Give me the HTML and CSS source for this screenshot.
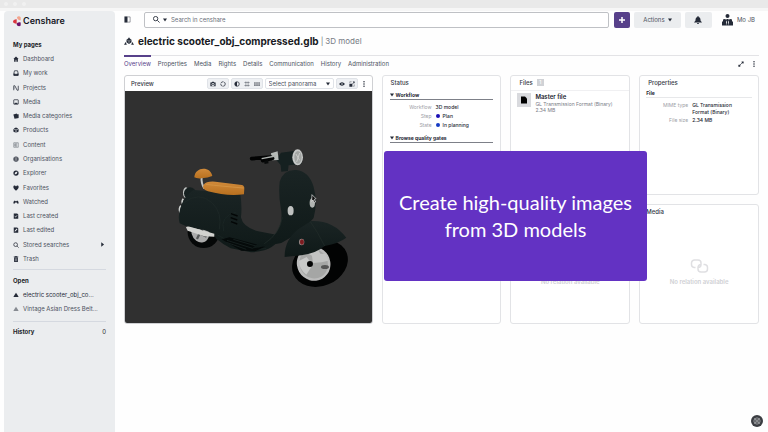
FILE: index.html
```html
<!DOCTYPE html>
<html lang="en">
<head>
<meta charset="utf-8">
<title>electric scooter_obj_compressed.glb – Censhare</title>
<link rel="stylesheet" href="styles.css">
</head>
<body>
<div class="window-bar"><i></i><i></i><i></i></div>
<div class="app">
  <aside class="sidebar">
    <a class="brand" href="#">
      <svg viewBox="0 0 24 32" aria-hidden="true"><path d="M12 3a7 7 0 0 1 11 0v9a9 9 0 0 1-11-9z" fill="#f3a48c"/><path d="M11 9v14C4 22 0 20 0 16s4-6 11-7z" fill="#d9363e"/><path d="M23 19v9a7 7 0 0 1-12-4c1-5 6-7 12-5z" fill="#6b1168"/></svg>
      <span>Censhare</span>
    </a>
    <h2>My pages</h2>
    <ul class="nav">
      <li><a href="#"><svg viewBox="0 0 16 16"><path d="M8 1 1 8h2v7h4v-5h2v5h4V8h2z"/></svg>Dashboard</a></li>
      <li><a href="#"><svg viewBox="0 0 16 16"><path class="line" d="M4 2h8l2 8v4H2v-4z"/><path d="M2 9h4l1 2h2l1-2h4v6H2z"/></svg>My work</a></li>
      <li><a href="#"><svg viewBox="0 0 16 16"><path class="line" d="M2 14V2h3l6 12h3V2M2 8h2"/></svg>Projects</a></li>
      <li><a href="#"><svg viewBox="0 0 16 16"><rect class="line" x="2" y="2" width="12" height="12" rx="1"/><path d="m3 13 3-4 2 2 2-2 3 4z"/></svg>Media</a></li>
      <li><a href="#"><svg viewBox="0 0 16 16"><path d="m1 4 9-3 1 2h4v10l-3 1-8 1z"/></svg>Media categories</a></li>
      <li><a href="#"><svg viewBox="0 0 16 16"><path d="m8 1 6 3-6 3-6-3zM1 5l6 3v7l-6-3zm14 0v7l-6 3V8z"/></svg>Products</a></li>
      <li><a href="#"><svg viewBox="0 0 16 16"><path class="thin" d="M2 2h12v12H2zM5 5h6M5 8h6M5 11h6M5 5v6"/></svg>Content</a></li>
      <li><a href="#"><svg viewBox="0 0 16 16"><circle cx="8" cy="8" r="7"/><path class="pale" d="M1 8h14M8 1v14M3 4q5 3 10 0M3 12q5-3 10 0"/></svg>Organisations</a></li>
      <li><a href="#"><svg viewBox="0 0 16 16"><path fill-rule="evenodd" d="M8 1a7 7 0 1 1 0 14A7 7 0 0 1 8 1zm4 3L6 6l-2 6 6-2z"/></svg>Explorer</a></li>
      <li><a href="#"><svg viewBox="0 0 16 16"><path d="M8 15C2 10 1 8 1 5c0-4 5-5 7-1 2-4 7-3 7 1 0 3-1 5-7 10z"/></svg>Favorites</a></li>
      <li><a href="#"><svg viewBox="0 0 16 16"><path d="M1 12c0-4 1-7 4-8l2 2h2l2-2c3 1 4 4 4 8h-4l-1-3H6l-1 3z"/></svg>Watched</a></li>
      <li><a href="#"><svg viewBox="0 0 16 16"><path fill-rule="evenodd" d="M2 1h9l3 3v11H2zm2 7 3 4 5-6-1-1-4 5-2-3z"/></svg>Last created</a></li>
      <li><a href="#"><svg viewBox="0 0 16 16"><path fill-rule="evenodd" d="M2 1h9l3 3v11H2zm2 11 3-1 5-5-2-2-5 5z"/></svg>Last edited</a></li>
      <li><a href="#"><svg viewBox="0 0 16 16"><circle class="line" cx="7" cy="7" r="5"/><path class="line" d="m11 11 4 4"/></svg>Stored searches<svg class="more" viewBox="0 0 16 16"><path d="m4 1 9 7-9 7z"/></svg></a></li>
      <li><a href="#"><svg viewBox="0 0 16 16"><path fill-rule="evenodd" d="M6 0h4v1h4v2H2V1h4zM3 4h10v12H3zm3 2v8h1V6zm3 0v8h1V6z"/></svg>Trash</a></li>
    </ul>
    <section class="open">
      <h2>Open</h2>
      <ul>
        <li><a class="current" href="#"><svg viewBox="0 0 16 16"><path d="m8 2 4 6 3 5H1l3-5z"/></svg>electric scooter_obj_co...</a></li>
        <li><a href="#"><svg viewBox="0 0 16 16"><path d="m8 2 4 6 3 5H1l3-5z"/></svg>Vintage Asian Dress Belt...</a></li>
      </ul>
    </section>
    <section class="history"><h2>History</h2><span>0</span></section>
  </aside>

  <main>
    <header class="topbar">
      <button class="plain toggle" aria-label="Toggle sidebar"><svg viewBox="0 0 16 16"><path d="M1 1h7v14H1z"/><path class="thin" d="M8 2h6v12H8"/></svg></button>
      <div class="search">
        <svg viewBox="0 0 16 16"><circle class="line" cx="6" cy="6" r="5"/><path class="line" d="m10 10 5 5"/></svg>
        <svg class="caret" viewBox="0 0 8 8"><path d="M0 1h8L4 7z"/></svg>
        <input type="search" placeholder="Search in censhare" aria-label="Search in censhare">
      </div>
      <button class="add" aria-label="Create"><svg viewBox="0 0 8 8"><path d="M3 0h2v3h3v2H5v3H3V5H0V3h3z"/></svg></button>
      <button class="actions">Actions <svg class="caret" viewBox="0 0 8 8"><path d="M0 1h8L4 7z"/></svg></button>
      <button class="bell" aria-label="Notifications"><svg viewBox="0 0 16 16"><path d="M7 0h2v2c4 1 4 4 4 7l3 4H0l3-4c0-3 0-6 4-7zM6 14h4c0 3-4 3-4 0z"/></svg></button>
      <button class="plain user"><svg viewBox="0 0 22 24"><circle cx="11" cy="4" r="4"/><path d="M2 11q3-2 6 0v4l1 8H0v-7l2-2zM14 11q3-2 6 0v3l2 2v7h-9l1-8zM9 10h4l1 3-2 3 1 7H9l1-7-2-3z"/></svg>Mo JB</button>
    </header>

    <div class="title">
      <svg viewBox="0 0 24 20"><path d="m12 0 2 3 4 3v6l-6 4-6-4V6l4-3z"/><path d="m4 11 2 3-1 2 3 2H0zM20 11l-2 3 1 2-3 2h8z"/><path class="pale" d="m8 7 4 2 4-2M12 9v5"/></svg>
      <h1>electric scooter_obj_compressed.glb</h1>
      <span>|</span><span class="kind">3D model</span>
    </div>

    <div class="tabs">
      <nav>
        <a class="active" href="#">Overview</a><a href="#">Properties</a><a href="#">Media</a><a href="#">Rights</a><a href="#">Details</a><a href="#">Communication</a><a href="#">History</a><a href="#">Administration</a>
      </nav>
      <button class="plain" aria-label="Expand"><svg viewBox="0 0 16 16"><path d="M9 1h6v6l-2-2-3 3-2-2 3-3zM7 15H1V9l2 2 3-3 2 2-3 3z"/></svg></button>
      <button class="plain" aria-label="More"><svg viewBox="0 0 16 16"><circle cx="8" cy="2" r="2"/><circle cx="8" cy="8" r="2"/><circle cx="8" cy="14" r="2"/></svg></button>
    </div>

    <div class="board">
      <section class="card preview">
        <div class="preview-head">
          <h3>Preview</h3>
          <div class="group">
            <button aria-label="Snapshot"><svg viewBox="0 0 16 16"><path fill-rule="evenodd" d="M1 4h3l2-2h4l2 2h3v10H1zm7 1a4 4 0 1 0 0 8 4 4 0 0 0 0-8z"/><circle cx="8" cy="9" r="2"/></svg></button>
            <button aria-label="Reset"><svg viewBox="0 0 16 16"><circle class="line" cx="8" cy="8" r="6" stroke-dasharray="8 1.5"/></svg></button>
          </div>
          <div class="group">
            <button aria-label="Contrast"><svg viewBox="0 0 16 16"><circle class="line" cx="8" cy="8" r="6"/><path d="M8 2v12A6 6 0 0 1 8 2z"/></svg></button>
            <button aria-label="Grid"><svg viewBox="0 0 16 16"><path class="thin" d="M1 4h14M1 12h14M5 1v14M11 1v14"/></svg></button>
            <button aria-label="Floor"><svg viewBox="0 0 16 16"><path d="M0 3h16v10H0z" opacity=".6"/><path class="pale" d="M0 6h16M0 10h16M5 3v10M11 3v10"/></svg></button>
          </div>
          <div class="select"><select aria-label="Panorama"><option>Select panorama</option></select><svg class="caret" viewBox="0 0 8 8"><path d="M0 1h8L4 7z"/></svg></div>
          <div class="group">
            <button aria-label="View"><svg viewBox="0 0 16 16"><path fill-rule="evenodd" d="M0 8q8-9 16 0-8 9-16 0zm8-2a2 2 0 1 0 0 4 2 2 0 0 0 0-4z"/></svg></button>
            <button aria-label="Full screen"><svg viewBox="0 0 16 16"><path d="M1 7h8v8H1zM10 1h5v5l-2-1-3 3-1-1 3-3z"/><path class="thin" d="M2 5V2h5M11 14h3V9"/></svg></button>
          </div>
          <button class="plain menu" aria-label="More"><svg viewBox="0 0 16 16"><circle cx="8" cy="2" r="2"/><circle cx="8" cy="8" r="2"/><circle cx="8" cy="14" r="2"/></svg></button>
        </div>
        <svg class="scene" viewBox="-108 -117 744 696" preserveAspectRatio="xMidYMid slice" role="img" aria-label="Electric scooter">
          <defs>
            <linearGradient id="body" x1="0" y1="0" x2="0" y2="1"><stop offset="0" stop-color="#1a2424"/><stop offset="1" stop-color="#0f1918"/></linearGradient>
            <linearGradient id="seat" x1="0" y1="0" x2="0" y2="1"><stop offset="0" stop-color="#d08a3a"/><stop offset="1" stop-color="#b8701f"/></linearGradient>
          </defs>
          <ellipse cx="130" cy="307" rx="48" ry="47" fill="#050707"/>
          <ellipse cx="120" cy="304" rx="27" ry="34" transform="rotate(-15 120 304)" fill="#aaa"/>
          <path d="m99 300 40 20M132 282l-22 45" stroke="#565858" stroke-width="7"/>
          <circle cx="123" cy="306" r="7" fill="#222"/>
          <ellipse cx="77" cy="188" rx="9" ry="16" fill="#c5c8c6"/>
          <circle cx="89" cy="190" r="18" fill="#162020"/>
          <path d="M69 206q-7 9 0 18M62 227q-8 9-2 22" stroke="#c9ccca" stroke-width="5" fill="none"/>
          <path d="M100 180 240 190q6 42 2 72 6 30 52 42l62 12q-5 47-84 51l-61-12q-20-10-43-29-10-18-36-26-44-4-74-20-6-20 2-44 10-38 40-56z" fill="url(#body)"/>
          <path d="M77 292q4-5 17 0l68 19v9l-30-1-50-17z" fill="#d2d2cf"/>
          <path d="M71 218q45-35 84 0 32 30 22 80" fill="none" stroke="#1f2a28" stroke-width="2"/>
          <path d="M190 303q-12-45 38-57M172 315l78 44 68-3" fill="none" stroke="#1d2827" stroke-width="2"/>
          <path d="m212 251 20 7m-21 5 20 7m-19 5 19 7" stroke="#030606" stroke-width="4"/>
          <path d="m184 328 24-6 106 28-28 13-43-1z" fill="#050a0a"/>
          <path d="m200 331 77 24m-58-27 78 23m-99-14 60 21" stroke="#151f1e" stroke-width="3"/>
          <path d="M124 140q-2 20 8 35" fill="none" stroke="#c1c4c2" stroke-width="6"/>
          <path d="M102 142c2-34 50-34 54-4q-13 6-32 7-16 1-22-3z" fill="url(#seat)"/>
          <path d="M130 164q8-11 35-9l80 10q8 3 7 11l-1 17q-50 7-108-9-20-8-13-20z" fill="url(#seat)"/>
          <path d="M137 163q40 5 113 11" fill="none" stroke="#d49342" stroke-width="3"/>
          <path d="M358 155q12-38 50-35 38 4 52 50 13 47 0 94-29 39-97 75l-90 17 26-19q40-3 58-47 11-22 4-59-7-40-3-76z" fill="url(#body)"/>
          <path d="M366 262q-8 50-54 79" fill="none" stroke="#222d2b" stroke-width="2"/>
          <ellipse cx="391" cy="242" rx="9" ry="14" fill="#bfc1c0"/>
          <ellipse cx="456" cy="219" rx="8" ry="14" fill="#b1b4b2"/>
          <path d="m455 194 12 12-5 2 4 8-4 2-4-8-4 4z" fill="#111" stroke="#eee" stroke-width="2"/>
          <path d="m348 90 14-22 38-5 21 5 3 34-39 4-2 17-20 2-2-20z" fill="#152020"/>
          <ellipse cx="412" cy="82" rx="16" ry="24" fill="#c7c9c8"/>
          <ellipse cx="413" cy="82" rx="11" ry="19" fill="#a3a6a4"/>
          <path d="m407 72 11 19m0-22-9 27" stroke="#c9cbc9" stroke-width="3"/>
          <path d="m332 70 20-6 3 26-20 1z" fill="#b7bbb8"/>
          <path d="m274 86 58-5M307 92l30-7" stroke="#020303" stroke-width="11" stroke-linecap="round"/>
          <path d="m312 97 12-2" stroke="#080a0a" stroke-width="10"/>
          <path d="m304 86 42-8" stroke="#aeb2af" stroke-width="4"/>
          <ellipse cx="479" cy="400" rx="86" ry="68" transform="rotate(-22 479 400)" fill="#020303"/>
          <ellipse cx="460" cy="401" rx="50" ry="52" transform="rotate(-30 460 401)" fill="#bbb"/>
          <ellipse cx="460" cy="401" rx="42" ry="45" transform="rotate(-30 460 401)" fill="#a5a6a5"/>
          <path d="m456 357 15-2 9 16 17 1 7 20-20 5-26 2-3-22-14-7z" fill="#c2c3c2"/>
          <path d="m416 393 23-12 18 24-19 29q-22-17-22-41z" fill="#c8c9c8"/>
          <circle cx="449" cy="402" r="9" fill="#030404"/>
          <ellipse cx="494" cy="411" rx="12" ry="6" fill="#555"/>
          <path d="M373 381q-1-53 45-86l35-22q65-3 105 50-22 17-65 25-23 21-70 28z" fill="url(#body)"/>
          <path d="M450 275q22 30 43 73" fill="none" stroke="#222d2b" stroke-width="2"/>
          <ellipse cx="424" cy="336" rx="8" ry="10" fill="#958582"/>
          <ellipse cx="425" cy="336" rx="6" ry="8" fill="#7e1b20"/>
        </svg>
      </section>

      <section class="card status">
        <h3>Status</h3>
        <h4><svg class="caret" viewBox="0 0 8 8"><path d="M0 1h8L4 7z"/></svg>Workflow</h4>
        <dl>
          <dt>Workflow</dt><dd>3D model</dd>
          <dt>Step</dt><dd><i class="dot"></i>Plan</dd>
          <dt>State</dt><dd><i class="dot light"></i>In planning</dd>
        </dl>
        <h4><svg class="caret" viewBox="0 0 8 8"><path d="M0 1h8L4 7z"/></svg>Browse quality gates</h4>
      </section>

      <section class="card files">
        <h3>Files <span class="badge">1</span></h3>
        <div class="file">
          <span class="thumb"><svg viewBox="0 0 16 16"><path d="M2 1h8l4 4v10H2z"/></svg></span>
          <div><strong>Master file</strong><p>GL Transmission Format (Binary)</p><p>2.34 MB</p></div>
        </div>
      </section>

      <section class="card properties">
        <h3>Properties</h3>
        <h4>File</h4>
        <dl>
          <dt>MIME type</dt><dd>GL Transmission Format (Binary)</dd>
          <dt>File size</dt><dd>2.34 MB</dd>
        </dl>
      </section>

      <section class="card relation first">
        <div class="empty"><svg viewBox="0 0 38 28"><path d="M11 17H8a6 6 0 0 1-5-6V8a6 6 0 0 1 6-6h7a6 6 0 0 1 6 6v3a6 6 0 0 1-6 6M27 11h3a6 6 0 0 1 5 6v3a6 6 0 0 1-6 6h-7a6 6 0 0 1-6-6v-3a6 6 0 0 1 6-6"/></svg><p>No relation available</p></div>
      </section>
      <section class="card relation">
        <h3>Media</h3>
        <div class="empty"><svg viewBox="0 0 38 28"><path d="M11 17H8a6 6 0 0 1-5-6V8a6 6 0 0 1 6-6h7a6 6 0 0 1 6 6v3a6 6 0 0 1-6 6M27 11h3a6 6 0 0 1 5 6v3a6 6 0 0 1-6 6h-7a6 6 0 0 1-6-6v-3a6 6 0 0 1 6-6"/></svg><p>No relation available</p></div>
      </section>
    </div>
  </main>
</div>
<div class="caption">Create high-quality images from 3D models</div>
<button class="help" aria-label="Help"><svg viewBox="0 0 16 16"><circle cx="8" cy="8" r="5"/><circle cx="8" cy="8" r="2"/><path d="m4 4 3 3m2 2 3 3m0-8L9 7m-2 2-3 3"/></svg></button>
</body>
</html>
```
FILE: styles.css
```css
* { box-sizing: border-box; margin: 0; padding: 0; }
body { font-family: Inter, "Liberation Sans", sans-serif; font-size: 6px; line-height: 8px; color: #4b5160; background: #fefefe; min-height: 100vh; display: flex; flex-direction: column; }
ul { list-style: none; }
a { color: inherit; text-decoration: none; }
button, input, select { font: inherit; color: inherit; border: 0; background: none; }
button { display: flex; align-items: center; justify-content: center; }
svg { display: block; width: 6px; height: 6px; flex: none; fill: #252b38; }
svg .line { fill: none; stroke: #252b38; stroke-width: 2; }
svg .thin { fill: none; stroke: #252b38; stroke-width: 1; }
svg .pale { fill: none; stroke: #ebedef; stroke-width: 1; }
.caret { width: 4px; height: 4px; }

.window-bar { height: 11px; flex: none; background: #e9e9e9; border-bottom: 3px solid #f6f6f6; display: flex; align-items: center; gap: 5px; padding-left: 4px; }
.window-bar i { width: 4px; height: 4px; border-radius: 50%; background: #f1f1f1; }
.app { flex: 1; display: flex; padding-left: 4px; }

.sidebar { width: 111px; flex: none; background: #ebedef; border-radius: 4px 4px 0 0; padding: 4px 9px 0; }
.brand { display: flex; align-items: center; gap: 2px; height: 12px; font-size: 9px; font-weight: 600; color: #15151f; }
.brand svg { width: 8px; height: 11px; }
h2 { font-size: 6px; font-weight: 700; color: #1b1e28; }
.sidebar > h2 { margin-top: 14px; line-height: 8px; }
.nav { display: grid; grid-auto-rows: 1fr; height: 214px; margin-top: 3px; }
.nav a { display: flex; align-items: center; gap: 4px; height: 100%; }
.nav .more { width: 5px; height: 5px; margin-left: auto; margin-right: 1px; }
.open { border-top: 1px solid #d5d9e0; margin-top: 3px; padding: 7px 0 5px; }
.open ul { margin-top: 3px; }
.open a { display: flex; align-items: center; gap: 4px; height: 14px; white-space: nowrap; }
.open svg { opacity: .5; }
.open .current { color: #252b38; }
.open .current svg { opacity: 1; }
.history { border-top: 1px solid #d5d9e0; padding-top: 6px; display: flex; justify-content: space-between; color: #1b1e28; }

main { flex: 1; min-width: 0; padding: 0 9px; }
.topbar { display: flex; align-items: center; height: 17px; }
.toggle svg { width: 7px; height: 7px; }
.search { flex: 1; display: flex; align-items: center; gap: 3px; height: 16px; margin: 0 5px 0 13px; padding: 0 8px; border: 1px solid #bfc1c5; border-radius: 2px; background: #fff; }
.search svg:first-child { width: 7px; height: 7px; }
.search input { flex: 1; min-width: 0; outline: 0; padding-left: 1px; }
.search input::placeholder { color: #6a6f79; opacity: 1; }
.add { width: 16px; height: 16px; border-radius: 2px; background: #57408a; }
.add svg { fill: #fff; }
.actions, .bell { height: 16px; border-radius: 2px; background: #ebedef; margin-left: 4px; }
.actions { width: 47px; gap: 3px; }
.bell { width: 27px; }
.bell svg { width: 8px; height: 8px; }
.user { gap: 4px; margin: 0 4px 0 10px; }
.user svg { width: 11px; height: 12px; }

.title { display: flex; align-items: center; gap: 2px; height: 26px; color: #777b84; font-size: 8px; }
.title svg { width: 10px; height: 9px; margin-right: 2px; }
.title h1 { font-size: 10px; line-height: 14px; font-weight: 700; color: #171922; }

.tabs { display: flex; gap: 7px; border-top: 1px solid #e3e3e6; height: 20px; padding-right: 2px; margin-top: 1px; }
.tabs nav { flex: 1; display: flex; gap: 7px; margin-top: -1px; }
.tabs nav a { border-top: 2px solid transparent; padding-top: 3px; }
.tabs .active { border-color: #57408a; color: #57408a; }
.tabs button { height: 16px; }

.board { display: grid; grid-template-columns: repeat(5, minmax(0, 1fr)); grid-template-rows: 120px 120px; gap: 9px; }
.card { border: 1px solid #e2e3e6; border-radius: 3px; padding: 3px 7px; background: #fff; min-width: 0; }
h3 { font-size: 6px; line-height: 8px; font-weight: 500; color: #343845; padding-left: 1px; }
h4 { font-size: 5px; line-height: 8px; font-weight: 700; color: #252833; }
.preview { grid-column: span 2; grid-row: span 2; padding: 0; display: flex; flex-direction: column; overflow: hidden; border-color: #cfd0d3; }
.preview-head { display: flex; align-items: center; gap: 2px; height: 15px; flex: none; padding: 0 5px; }
.preview-head h3 { flex: 1; }
.preview-head .menu { margin-left: 1px; }
.group { display: flex; border: 1px solid #e0e3e8; border-radius: 2px; background: #eef0f3; }
.group button { width: 10px; height: 9px; }
.select { display: flex; align-items: center; width: 69px; height: 11px; padding: 0 3px; border: 1px solid #e0e3e8; border-radius: 2px; }
.select select { appearance: none; flex: 1; min-width: 0; outline: 0; }
.scene { width: 100%; height: auto; flex: 1; min-height: 0; background: #303030; }

.status { grid-row: span 2; }
.status h4 { display: flex; align-items: center; gap: 2px; border-bottom: 1px solid #7d8088; }
.status h3 + h4 { margin-top: 4px; }
.status dl { row-gap: 1px; margin-bottom: 5px; }
dl { display: grid; grid-template-columns: 42px 1fr; column-gap: 4px; font-size: 5px; line-height: 8px; margin-top: 3px; }
dt { text-align: right; color: #9da0a7; }
dd { color: #252833; font-weight: 500; display: flex; align-items: center; }
.dot { width: 4px; height: 4px; border-radius: 50%; background: #1a0fb5; margin-right: 3px; }
.dot.light { background: #153bc4; }

.files { padding: 3px 0; }
.files h3 { display: flex; gap: 4px; padding: 0 8px 3px; border-bottom: 1px solid #f0f0f2; }
.badge { width: 7px; height: 7px; line-height: 7px; font-size: 5px; text-align: center; background: #d0d2d6; color: #fff; }
.file { display: flex; gap: 4px; padding: 2px 6px; font-size: 5px; line-height: 6px; color: #797d86; }
.file strong { display: block; font-size: 6px; line-height: 8px; font-weight: 600; color: #20232d; }
.file p { white-space: nowrap; }
.thumb { width: 14px; height: 14px; background: #d9dade; display: flex; align-items: center; justify-content: center; }
.thumb svg { width: 8px; height: 8px; fill: #000; }

.properties { padding: 3px 6px; }
.properties h3 { padding-left: 2px; }
.properties h4 { margin-top: 2px; border-bottom: 1px solid #e7e8ea; }
.properties dl { row-gap: 1px; line-height: 7px; padding-right: 12px; margin-top: 4px; }

.relation { padding: 3px 5px; display: flex; flex-direction: column; }
.relation.first { padding-top: 11px; }
.empty { flex: 1; display: flex; flex-direction: column; align-items: center; justify-content: center; gap: 5px; padding-top: 9px; color: #cfd0d4; font-weight: 600; }
.empty svg { width: 19px; height: 14px; fill: none; stroke: #dfdfe2; stroke-width: 3; }

.caption { position: absolute; left: 50%; top: 35%; width: 263px; padding: 38px 10px; border-radius: 3px; background: #6332c3; color: #fff; font-family: Lato, sans-serif; font-size: 20px; line-height: 27px; text-align: center; }
.help { position: absolute; right: 5px; bottom: 5px; width: 12px; height: 12px; border-radius: 50%; background: #3b3d42; }
.help svg { width: 10px; height: 10px; fill: none; stroke: #c6c7c9; }
```
